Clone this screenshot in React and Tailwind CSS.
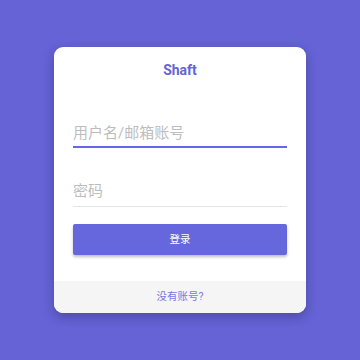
export default function App() {
  const font = { fontFamily: 'Roboto, "Noto Sans CJK SC", sans-serif' };
  return (
    <div className="w-[360px] h-[360px] bg-[#6563d6] flex items-start justify-center pt-[47px]" style={font}>
      <div className="w-[252px] h-[266px] bg-white rounded-[9px] shadow-[0_4px_12px_rgba(0,0,0,0.25)] overflow-hidden flex flex-col">
        <div className="flex-1 px-[19px] flex flex-col">
          <div className="text-center text-[#6563d6] font-bold text-[14px] leading-[16px] mt-[15px]">Shaft</div>
          <div className="mt-[34px] h-[36px] pt-[8px] border-b-2 border-[#6767dd] flex items-center text-[#bdbdbd] text-[15px]">用户名/邮箱账号</div>
          <div className="mt-[24px] h-[35px] pt-[4px] border-b border-[#e5e5e5] flex items-center text-[#bdbdbd] text-[15px]">密码</div>
          <div className="mt-[17px] h-[31px] bg-[#6767dd] rounded-[2px] shadow-[0_2px_3px_rgba(0,0,0,0.25)] flex items-center justify-center text-white text-[10.5px]">登录</div>
        </div>
        <div className="h-[32px] bg-[#f5f5f5] flex items-center justify-center text-[#7b79e0] text-[10.5px]">没有账号?</div>
      </div>
    </div>
  );
}
